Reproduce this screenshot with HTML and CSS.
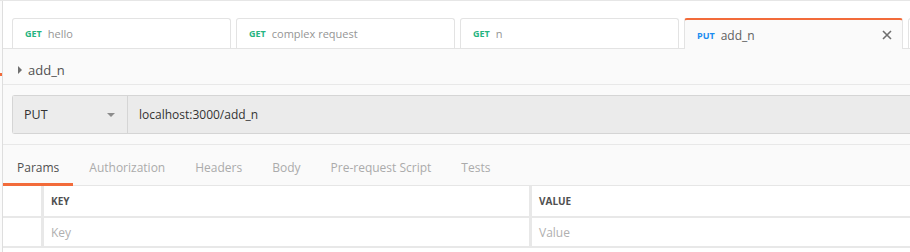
FILE: index.html
```html
<!DOCTYPE html>
<html lang="en">
  <head>
    <meta charset="UTF-8" />
    <meta name="viewport" content="width=device-width, initial-scale=1.0" />
    <title>add_n</title>
    <link rel="stylesheet" href="styles.css">
  </head>
  <body>
    <div class="app">
      <div class="sidebar">
        <div class="sidebar-mark"></div>
      </div>

      <div class="main">
        <!-- Open request tabs -->
        <div class="tabs">
          <div class="tab">
            <span class="method get">GET</span>
            <span class="tab-name">hello</span>
          </div>
          <div class="tab">
            <span class="method get">GET</span>
            <span class="tab-name">complex request</span>
          </div>
          <div class="tab">
            <span class="method get">GET</span>
            <span class="tab-name">n</span>
          </div>
          <div class="tab active">
            <span class="method put">PUT</span>
            <span class="tab-name">add_n</span>
            <svg class="close" width="10" height="10" viewBox="0 0 10 10">
              <path d="M1 1 L9 9 M9 1 L1 9" stroke="#6f6f6f" stroke-width="1.6" />
            </svg>
          </div>
          <div class="tab"></div>
        </div>

        <div class="panel">
          <div class="request-title">
            <span class="caret-right"></span>
            <span>add_n</span>
          </div>

          <div class="url-row">
            <div class="url-box">
              <div class="method-select">
                <span>PUT</span>
                <span class="caret-down"></span>
              </div>
              <div class="url-text">localhost:3000/add_n</div>
            </div>
          </div>

          <div class="req-tabs">
            <div class="req-tab active">Params</div>
            <div class="req-tab">Authorization</div>
            <div class="req-tab">Headers</div>
            <div class="req-tab">Body</div>
            <div class="req-tab">Pre-request Script</div>
            <div class="req-tab">Tests</div>
          </div>

          <div class="params">
            <div class="params-row head">
              <div class="cell check"></div>
              <div class="cell key">KEY</div>
              <div class="cell value">VALUE</div>
            </div>
            <div class="params-row">
              <div class="cell check"></div>
              <div class="cell key placeholder">Key</div>
              <div class="cell value placeholder">Value</div>
            </div>
          </div>
        </div>
      </div>
    </div>
  </body>
</html>
```

FILE: styles.css
```css
body {
  margin: 0;
  font-family: "Open Sans", "DejaVu Sans", sans-serif;
  background-color: #ffffff;
  color: #505050;
}
.app {
  display: flex;
  height: 251px;
  border-top: 1px solid #e6e6e6;
  overflow: hidden;
}
.sidebar {
  width: 2px;
  flex-shrink: 0;
  background-color: #fbfbfb;
}
.sidebar-mark {
  margin-top: 72px;
  height: 3px;
  background-color: #f26b3a;
}
.main {
  flex: 1;
  min-width: 0;
  border-left: 1px solid #dedede;
  overflow: hidden;
}

/* request tabs along the top */
.tabs {
  display: flex;
  gap: 5px;
  padding: 17px 0 0 9px;
  border-bottom: 1px solid #e3e3e3;
  background-color: #ffffff;
}
.tab {
  flex-shrink: 0;
  display: flex;
  align-items: center;
  width: 219px;
  height: 30px;
  box-sizing: border-box;
  padding: 0 12px;
  border: 1px solid #e3e3e3;
  border-bottom: none;
  border-radius: 3px 3px 0 0;
  background-color: #ffffff;
}
.tab.active {
  height: 31px;
  margin-bottom: -1px;
  padding-top: 1px;
  border-top: 2px solid #f26b3a;
  background-color: #fafafa;
}
.method {
  font-size: 9px;
  font-weight: 700;
  margin-right: 6px;
}
.method.get {
  color: #26b47f;
}
.method.put {
  color: #1a8cf0;
}
.tab-name {
  font-size: 11px;
  color: #959595;
}
.tab.active .tab-name {
  font-size: 12px;
  color: #606060;
}
.close {
  margin-left: auto;
  margin-right: -2px;
}

.panel {
  background-color: #fafafa;
}
.request-title {
  display: flex;
  align-items: center;
  height: 36px;
  box-sizing: border-box;
  padding: 7px 0 0 15px;
  font-size: 13px;
  color: #505050;
  border-bottom: 1px solid #e8e8e8;
}
.caret-right {
  width: 0;
  height: 0;
  margin-right: 6px;
  border-top: 4px solid transparent;
  border-bottom: 4px solid transparent;
  border-left: 4px solid #707070;
}

.url-row {
  padding: 10px 0 10px 9px;
  border-bottom: 1px solid #e8e8e8;
}
.url-box {
  display: flex;
  height: 39px;
  box-sizing: border-box;
  border: 1px solid #d5d5d5;
  border-right: none;
  border-radius: 3px 0 0 3px;
  background-color: #ebebeb;
  font-size: 12px;
  color: #333333;
}
.method-select {
  display: flex;
  align-items: center;
  width: 115px;
  flex-shrink: 0;
  box-sizing: border-box;
  padding: 0 12px 0 11px;
  border-right: 1px solid #d5d5d5;
  background-color: #ececec;
  font-size: 12.5px;
}
.caret-down {
  margin-left: auto;
  width: 0;
  height: 0;
  border-left: 4px solid transparent;
  border-right: 4px solid transparent;
  border-top: 4px solid #8c8c8c;
}
.url-text {
  display: flex;
  align-items: center;
  padding-left: 11px;
}

.req-tabs {
  display: flex;
  gap: 2px;
  height: 40px;
  border-bottom: 1px solid #e6e6e6;
}
.req-tab {
  display: flex;
  align-items: center;
  padding: 6px 14px 0;
  font-size: 12px;
  color: #ababab;
  border-bottom: 3px solid transparent;
  margin-bottom: -1px;
}
.req-tab.active {
  color: #505050;
  border-bottom-color: #f26b3a;
}

.params {
  background-color: #ffffff;
}
.params-row {
  display: flex;
  height: 28px;
  border-bottom: 2px solid #e8e8e8;
}
.params-row.head {
  height: 30px;
}
.cell {
  display: flex;
  align-items: center;
  flex-shrink: 0;
  box-sizing: border-box;
  padding-left: 7px;
  font-size: 12px;
}
.cell.check {
  width: 41px;
  border-right: 3px solid #e8e8e8;
}
.cell.key {
  width: 488px;
  border-right: 3px solid #e8e8e8;
}
.cell.value {
  width: 488px;
}
.head .cell {
  font-size: 10px;
  font-weight: 700;
  color: #505050;
}
.placeholder {
  color: #b0b0b0;
}
```
